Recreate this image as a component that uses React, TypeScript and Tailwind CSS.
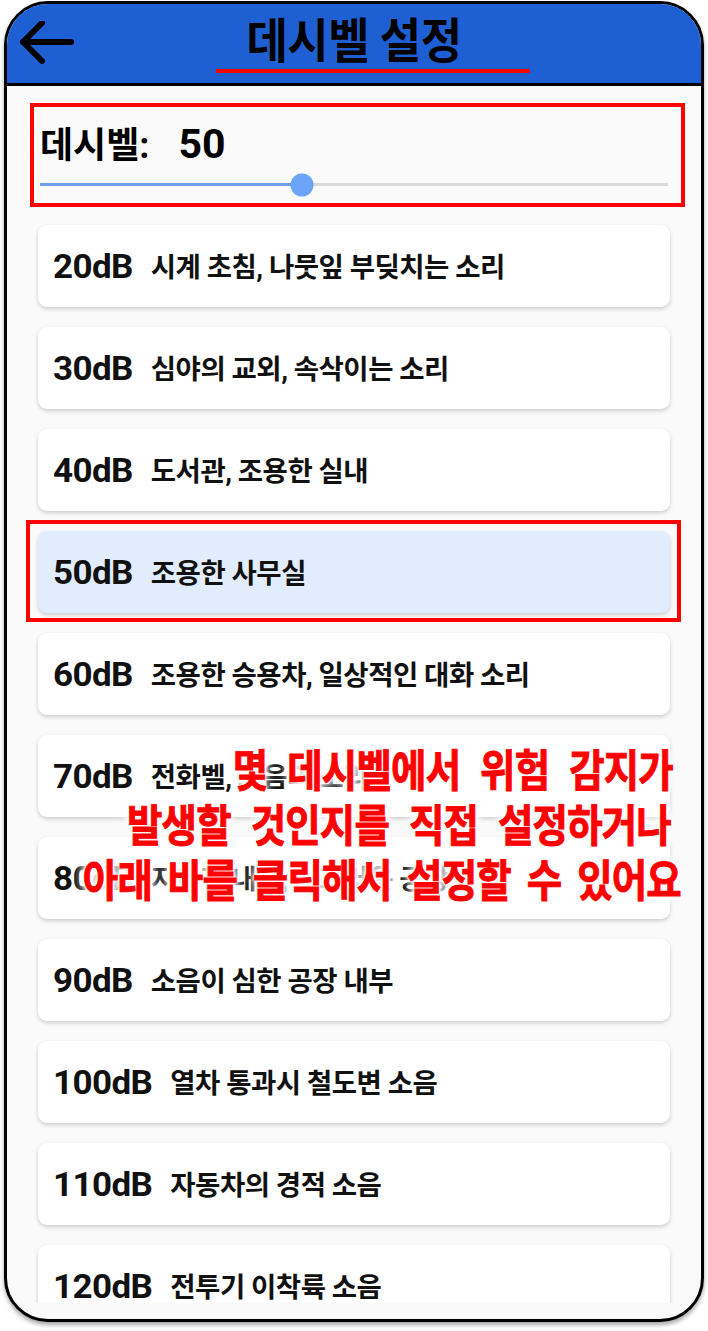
import React from 'react';

const ITEMS = [
  { db: '20dB', desc: '시계 초침, 나뭇잎 부딪치는 소리' },
  { db: '30dB', desc: '심야의 교외, 속삭이는 소리' },
  { db: '40dB', desc: '도서관, 조용한 실내' },
  { db: '50dB', desc: '조용한 사무실', active: true },
  { db: '60dB', desc: '조용한 승용차, 일상적인 대화 소리' },
  { db: '70dB', desc: '전화벨, 고음의 소리' },
  { db: '80dB', desc: '지하철 내부, 시끄러운 공장' },
  { db: '90dB', desc: '소음이 심한 공장 내부' },
  { db: '100dB', desc: '열차 통과시 철도변 소음' },
  { db: '110dB', desc: '자동차의 경적 소음' },
  { db: '120dB', desc: '전투기 이착륙 소음' },
];

const FONT = "font-['Roboto','Noto_Sans_CJK_KR',sans-serif]";
const HALO =
  '[text-shadow:0_0_2px_#fff,0_0_2px_#fff,0_0_3px_#fff,0_0_4px_#fff,0_0_6px_#fff,0_0_8px_#fff,0_0_10px_#fff,0_0_14px_rgba(255,255,255,0.9)]';

const BackArrow = () => (
  <svg width="60" height="50" viewBox="0 0 60 50" fill="none">
    <path
      d="M8 21H56M8 21L27 2M8 21L27 40"
      stroke="black"
      strokeWidth="6"
      strokeLinecap="round"
      strokeLinejoin="round"
    />
  </svg>
);

const DbCard = ({ db, desc, active }: { db: string; desc: string; active?: boolean }) => (
  <div className="relative">
    <div
      className={`h-[82px] rounded-[9px] flex items-center pl-[15px] pt-[4px] shadow-[0_2px_4px_rgba(0,0,0,0.18)] ${
        active ? 'bg-[#e1edfc]' : 'bg-white'
      }`}
    >
      <span className="text-[35px] font-bold text-[#111] tracking-[-0.6px] scale-y-95">{db}</span>
      <span className="ml-[18px] text-[27.5px] font-bold text-[#111] tracking-[-0.5px]">{desc}</span>
    </div>
    {active && (
      <div className="absolute -left-[12px] -right-[11px] -top-[11px] -bottom-[9px] border-[4px] border-[#ff0000]"></div>
    )}
  </div>
);

export default function App() {
  const value = 50;
  const percent = (value / 120) * 100;

  return (
    <div className={`w-[708px] h-[1331px] bg-white pl-1 pt-px ${FONT}`}>
      <div className="relative w-[700px] h-[1321px] border-[3px] border-black rounded-[44px] overflow-hidden bg-[#fafafa] flex flex-col shadow-[0_3px_4px_rgba(0,0,0,0.35)]">
        {/* header */}
        <header className="relative h-[82px] shrink-0 bg-[#1f5fd4] border-b-[3px] border-black flex items-center justify-center">
          <div className="absolute left-[8px] top-[17px]">
            <BackArrow />
          </div>
          <h1 className="text-[45px] font-bold text-black leading-none scale-y-105 -mt-[4px] tracking-[-0.5px]">
            데시벨 설정
          </h1>
          <div className="absolute left-[209px] top-[65px] w-[314px] h-[4px] bg-[#ff0000]"></div>
        </header>

        {/* content */}
        <main className="flex-1 overflow-hidden flex flex-col pb-[16px]">
          <div className="flex-1 overflow-hidden">
            <section className="mt-[17px] ml-[23px] mr-[16px] h-[104px] border-[4px] border-[#ff0000] pl-[6px] pr-[13px] pt-[17px]">
              <div className="flex items-baseline font-bold text-black leading-none">
                <span className="text-[36px]">데시벨:</span>
                <span className="ml-[29px] text-[41px]">{value}</span>
              </div>
              <div className="relative mt-[18px] h-[3px] bg-[#d9d9d9]">
                <div className="h-full bg-[#6d9fee]" style={{ width: `${percent}%` }}></div>
                <div
                  className="absolute top-1/2 -translate-x-1/2 -translate-y-1/2 w-[23px] h-[23px] rounded-full bg-[#6ba4f8]"
                  style={{ left: `${percent}%` }}
                ></div>
              </div>
            </section>

            <div className="mt-[18px] mx-[31px] flex flex-col gap-[20px]">
              {ITEMS.map((item) => (
                <DbCard key={item.db} db={item.db} desc={item.desc} active={item.active} />
              ))}
            </div>
          </div>
        </main>

        {/* annotation overlay */}
        <div
          className={`absolute right-[20px] top-[740px] flex flex-col items-end text-[38.5px] font-bold text-[#ff0000] [-webkit-text-stroke:0.8px_#ff0000] [word-spacing:11px] tracking-[-0.8px] ${HALO}`}
        >
          <div className="h-[55px] leading-[55px] scale-y-[1.15] mr-[8px]">몇 데시벨에서 위험 감지가</div>
          <div className="h-[55px] leading-[55px] scale-y-[1.15] mr-[10px]">발생할 것인지를 직접 설정하거나</div>
          <div className="h-[55px] leading-[55px] scale-y-[1.15] [word-spacing:7px]">
            아래 바를 클릭해서 설정할 수 있어요
          </div>
        </div>
      </div>
    </div>
  );
}
